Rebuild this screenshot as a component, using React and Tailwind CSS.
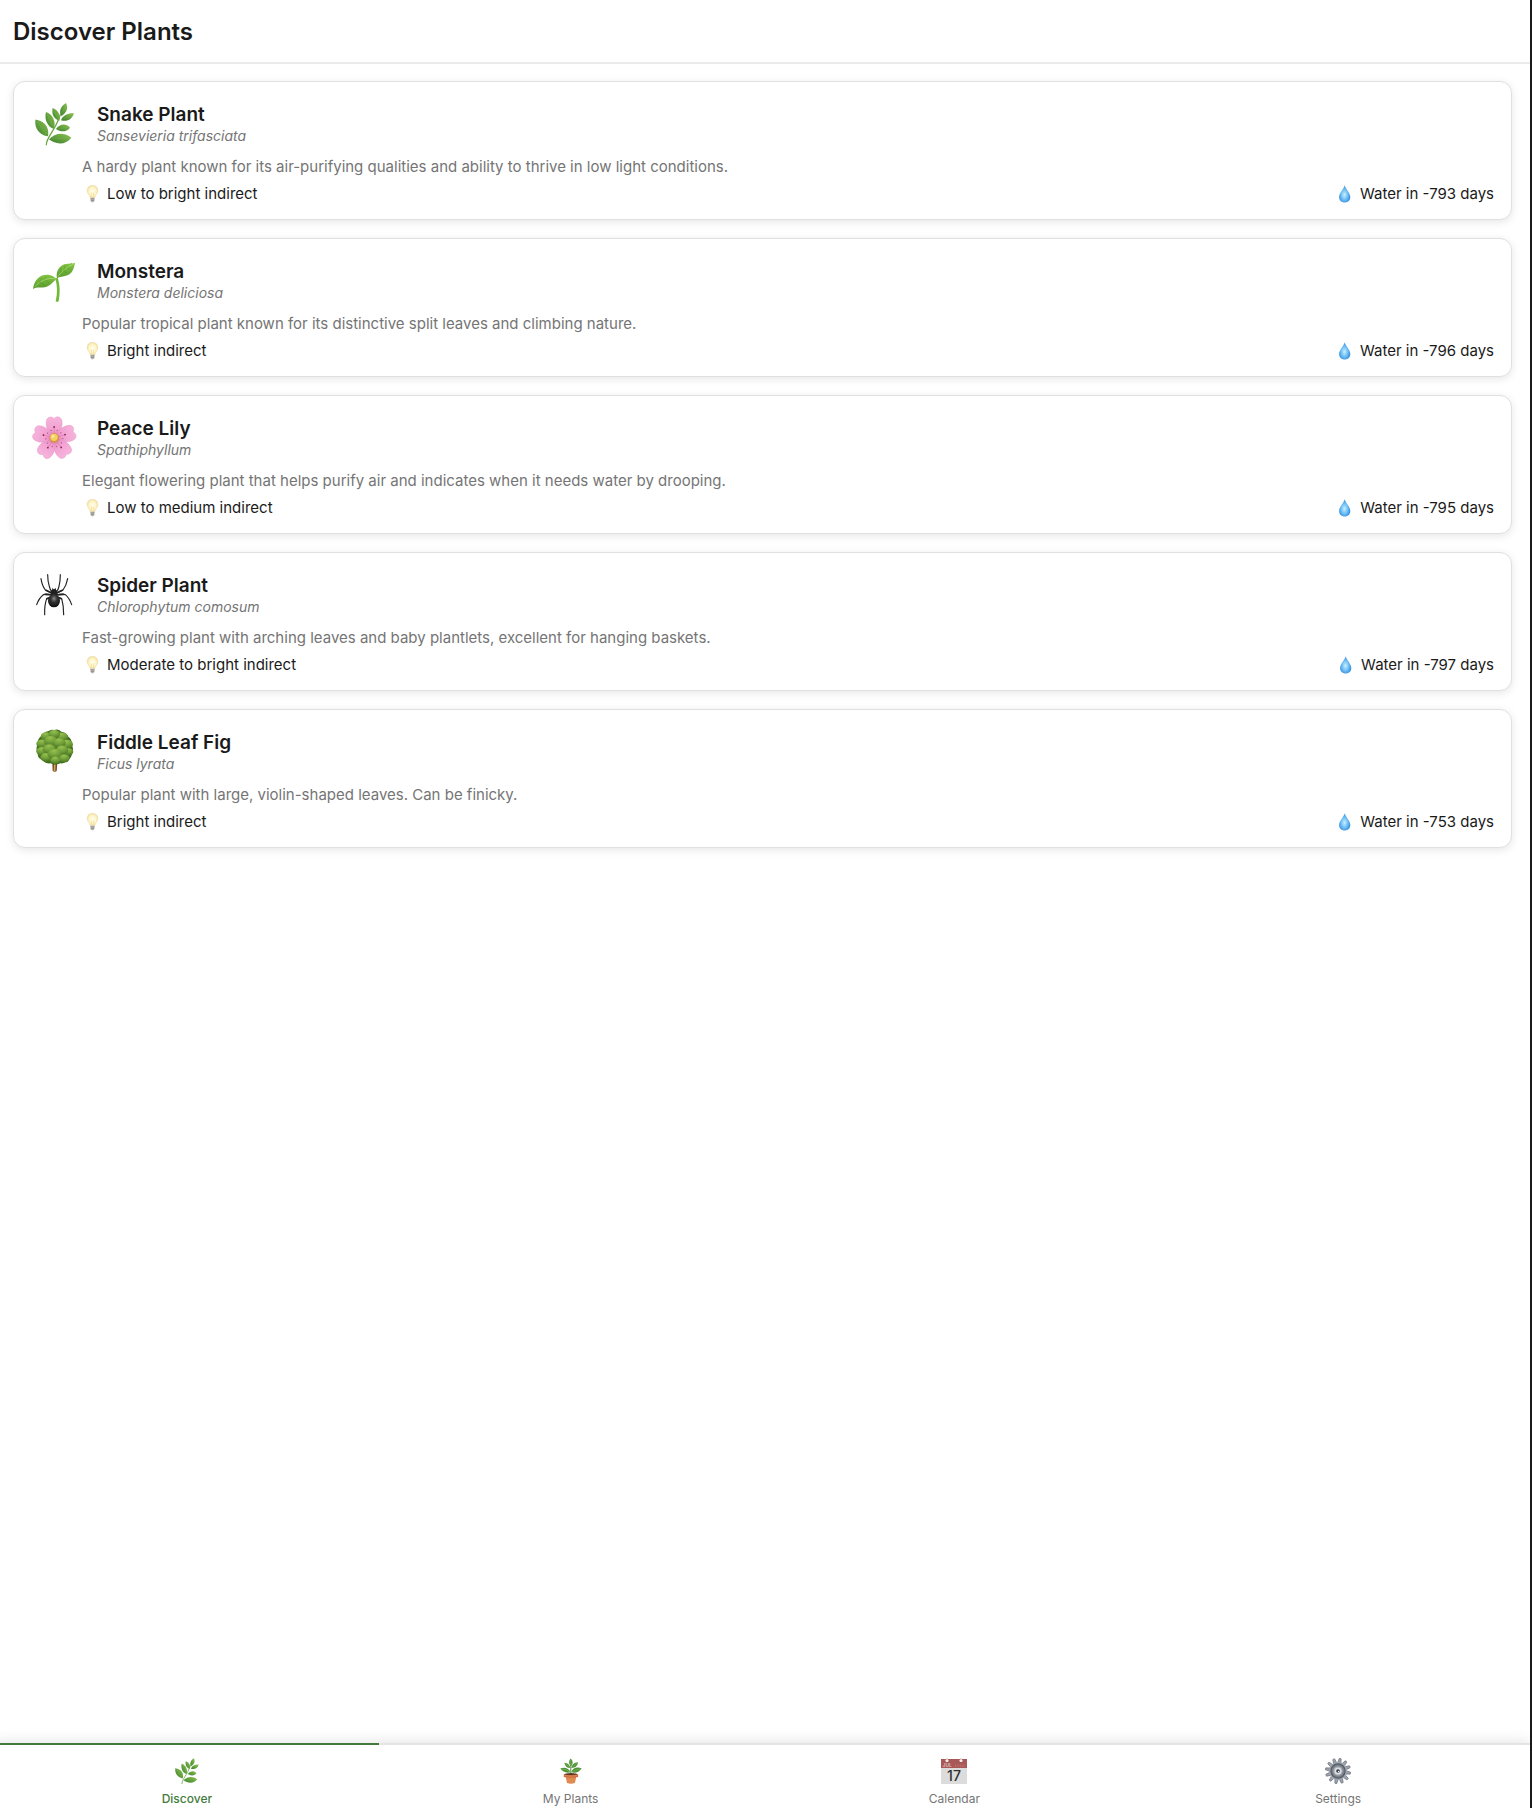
import React, { useState } from 'react';

const HerbIcon = ({ className, viewBox = '36 30 138 144' }) => (
  <svg className={className} viewBox={viewBox} aria-hidden="true">
    <defs>
      <linearGradient id="herb" x1="1" y1="0" x2="0" y2="1">
        <stop offset="0" stopColor="#8cc251" />
        <stop offset="1" stopColor="#3a7f2b" />
      </linearGradient>
    </defs>
    <g fill="url(#herb)">
      <path d="M46 89 C64 90 90 104 84 139 C59 135 43 116 46 89Z" />
      <path d="M78 66 C96 72 109 92 102 117 C82 110 72 88 78 66Z" />
      <path d="M98 54 C114 61 123 74 118 92 C101 87 94 72 98 54Z" />
      <path d="M138 39 C146 54 140 70 123 78 C116 62 123 48 138 39Z" />
      <path d="M162 70 C156 89 141 96 123 91 C129 75 144 69 162 70Z" />
      <path d="M150 113 C139 127 123 127 108 117 C119 101 138 99 150 113Z" />
      <path d="M154 143 C137 166 107 164 87 148 C106 127 133 126 154 143Z" />
    </g>
    <path d="M79 164 C79 142 106 122 121 74" fill="none" stroke="#6aa840" strokeWidth="4" strokeLinecap="round" />
    <path
      d="M52 95 L80 132 M82 73 L99 110 M101 60 L115 84 M136 47 L126 70 M154 75 L130 87 M143 113 L114 116 M146 144 L94 147"
      stroke="#a7d67c"
      strokeWidth="1"
      opacity=".5"
    />
  </svg>
);

// Same herb without the padding around it
const HerbTabIcon = ({ className }) => <HerbIcon className={className} viewBox="40 38 128 128" />;

const SeedlingIcon = ({ className }) => (
  <svg className={className} viewBox="36 22 138 144" aria-hidden="true">
    <defs>
      <linearGradient id="sprout" x1="0" y1="0" x2="0" y2="1">
        <stop offset="0" stopColor="#86c545" />
        <stop offset="1" stopColor="#569a2c" />
      </linearGradient>
    </defs>
    <path d="M107 155 C113 130 112 108 106 87 L113 84 C121 108 120 132 116 155 Q111 158 107 155Z" fill="#72b83a" />
    <path d="M39 118 C42 92 58 75 80 75 C95 75 104 82 112 89 C102 90 97 105 80 111 C64 116 50 110 39 118Z" fill="url(#sprout)" />
    <path d="M111 87 C107 65 117 48 136 43 C148 40 157 43 165 39 C162 55 158 71 142 77 C128 82 119 80 111 87Z" fill="url(#sprout)" />
    <path d="M45 111 C60 93 85 82 108 88 M113 82 C124 64 140 53 160 43" fill="none" stroke="#b3e378" strokeWidth="2" />
    <path
      d="M58 99 L66 83 M70 92 L80 79 M61 98 L74 107 M76 90 L88 100 M122 69 L122 55 M133 60 L135 47 M129 63 L142 71 M142 54 L152 60"
      stroke="#458724"
      strokeWidth="1.5"
      opacity=".6"
    />
  </svg>
);

const petalAngles = [0, 72, 144, 216, 288];

const BlossomIcon = ({ className }) => (
  <svg className={className} viewBox="36 28 138 144" aria-hidden="true">
    <defs>
      <linearGradient id="petal" x1="0" y1="0" x2="0" y2="1">
        <stop offset="0" stopColor="#f7b4dd" />
        <stop offset=".65" stopColor="#f09fd0" />
        <stop offset="1" stopColor="#d5699f" />
      </linearGradient>
    </defs>
    {petalAngles.map((angle) => (
      <g key={angle} transform={`rotate(${angle - 1} 103 101)`}>
        <path
          d="M103 103 C88 88 74 65 81 45 C85 35 96 34 103 42 C110 34 122 35 126 46 C132 65 118 88 103 103Z"
          fill="url(#petal)"
          stroke="#dd86b8"
          strokeWidth="1"
        />
        <path d="M103 94 L103 68" stroke="#d9679f" strokeWidth="1.5" />
        <path d="M103 94 L95 77 M103 94 L111 77" stroke="#e080b2" strokeWidth="1" />
        <circle cx="103" cy="67" r="2.8" fill="#92294f" />
        <circle cx="94" cy="77" r="1.8" fill="#b0487a" />
        <circle cx="112" cy="77" r="1.8" fill="#b0487a" />
      </g>
    ))}
    <circle cx="103" cy="100" r="14" fill="#d7953a" />
    <circle cx="102" cy="98" r="11" fill="#f4cf62" />
    <circle cx="99" cy="95" r="4" fill="#fbe9a0" />
  </svg>
);

const SpiderIcon = ({ className }) => (
  <svg className={className} viewBox="36 32 138 144" aria-hidden="true">
    <defs>
      <radialGradient id="spider" cx=".5" cy=".35" r=".65">
        <stop offset="0" stopColor="#8c8c8c" />
        <stop offset=".4" stopColor="#353535" />
        <stop offset="1" stopColor="#0c0c0c" />
      </radialGradient>
    </defs>
    <g fill="none" stroke="#242424" strokeWidth="3.5" strokeLinecap="round" strokeLinejoin="round">
      <path d="M98 97 Q89 88 88 78 Q83 62 83 43" />
      <path d="M107 97 Q116 88 117 78 Q121 62 121 43" />
      <path d="M96 99 L76 89 Q66 76 63 55" />
      <path d="M109 99 L129 89 Q139 76 143 55" />
      <path d="M96 104 Q82 99 70 103 Q57 113 50 133" />
      <path d="M109 104 Q124 99 136 103 Q148 113 155 133" />
      <path d="M94 110 L80 115 Q73 135 74 163" />
      <path d="M111 110 L125 115 Q131 135 131 163" />
    </g>
    <g fill="none" stroke="#242424" strokeWidth="5" strokeLinecap="round">
      <path d="M97 99 L78 90 M108 99 L127 90 M95 104 L76 102 M110 104 L130 102 M93 111 L81 115 M112 111 L124 115" />
    </g>
    <path d="M97 91 L97 82 L102 88 L107 82 L108 91Z" fill="#1c1c1c" />
    <ellipse cx="102" cy="98" rx="10" ry="11" fill="#1f1f1f" />
    <ellipse cx="102" cy="121" rx="18" ry="20" fill="url(#spider)" />
  </svg>
);

const foliage = [
  [78, 56, 16], [126, 58, 18], [103, 50, 17], [66, 78, 17], [141, 80, 18], [92, 70, 20],
  [118, 76, 19], [66, 101, 17], [146, 102, 14], [88, 95, 20], [126, 98, 19], [78, 119, 17],
  [104, 110, 21], [133, 122, 16], [106, 128, 15],
];

const TreeIcon = ({ className }) => (
  <svg className={className} viewBox="36 31 138 144" aria-hidden="true">
    <defs>
      <radialGradient id="foliage" cx=".45" cy=".15" r=".9">
        <stop offset="0" stopColor="#98c04f" />
        <stop offset=".5" stopColor="#71a03a" />
        <stop offset="1" stopColor="#466f22" />
      </radialGradient>
    </defs>
    <path d="M97 130 L112 130 L110 160 Q104 164 98 160Z" fill="#6f4523" />
    <path d="M102 140 L107 140 L106 161 L101 161Z" fill="#d6a65b" />
    <path
      d="M103 37 Q115 33 124 42 Q139 43 145 57 Q157 65 155 81 Q163 95 156 108 Q154 123 142 127 Q135 139 121 137 Q106 144 91 137 Q76 139 67 127 Q53 122 53 108 Q46 94 53 80 Q52 63 64 56 Q71 42 84 41 Q93 34 103 37Z"
      fill="#42711d"
    />
    {foliage.map(([x, y, r]) => (
      <ellipse key={`${x}-${y}`} cx={x} cy={y} rx={r} ry={r * 0.75} fill="url(#foliage)" />
    ))}
  </svg>
);

const BulbIcon = () => (
  <svg className="h-[18px] w-5 shrink-0" viewBox="0 0 20 18" aria-hidden="true">
    <defs>
      <radialGradient id="bulb" cx=".5" cy=".5" r=".55">
        <stop offset="0" stopColor="#fffef5" />
        <stop offset=".6" stopColor="#fff4c4" />
        <stop offset="1" stopColor="#ecd79a" />
      </radialGradient>
    </defs>
    <path d="M10.5 .2 C13.7 .2 15.9 2.5 15.9 5.5 C15.9 8.8 13.2 9.8 12.8 12.8 L8.2 12.8 C7.8 9.8 5.1 8.8 5.1 5.5 C5.1 2.5 7.3 .2 10.5 .2Z" fill="url(#bulb)" stroke="#eadcae" strokeWidth=".5" />
    <path d="M9.3 12 L9.5 7.5 M11.7 12 L11.5 7.5" stroke="#efd88a" strokeWidth=".6" />
    <path d="M8.4 12.8 H12.6 L12.3 16.3 Q10.5 18.6 8.7 16.3Z" fill="#b5b2ac" />
    <path d="M8.5 14 L12.4 13.7 M8.7 15.6 L12.3 15.3" stroke="#85827c" strokeWidth=".6" />
  </svg>
);

const DropIcon = () => (
  <svg className="h-[18px] w-5 shrink-0" viewBox="0 0 20 18" aria-hidden="true">
    <defs>
      <radialGradient id="drop" cx=".48" cy=".55" r=".55">
        <stop offset="0" stopColor="#c9effd" />
        <stop offset=".5" stopColor="#74c3f6" />
        <stop offset="1" stopColor="#2f88dc" />
      </radialGradient>
    </defs>
    <path d="M9.7 .2 C10.6 4 15.3 7.7 15.3 12 C15.3 15.4 12.8 17.5 9.7 17.5 C6.6 17.5 4.1 15.4 4.1 12 C4.1 7.7 8.8 4 9.7 .2Z" fill="url(#drop)" />
  </svg>
);

const PottedPlantIcon = ({ className }) => (
  <svg className={className} viewBox="0 0 26 26" aria-hidden="true">
    <path d="M12.8 17 V4" stroke="#5a8f3a" strokeWidth="1" />
    <g fill="#4e9238">
      <path d="M13 8 C10.5 6 10.5 3 12.6 .5 C15.5 3 15 6 13 8Z" />
      <path d="M12.3 10 C9 10 7 8.3 6.3 4.8 C9.8 5 12 7 12.3 10Z" />
      <path d="M13.4 10 C13.7 6.7 16 4.5 20 4.3 C19.6 8 17 10.2 13.4 10Z" />
      <path d="M12.4 14.3 C8.5 15.4 4.5 13.8 2.3 10.6 C6.5 8.8 11 10.2 12.4 14.3Z" />
      <path d="M13.3 14.3 C14.3 10.2 19 8.3 23.7 10.5 C21.2 14.2 17 15.4 13.3 14.3Z" />
    </g>
    <path d="M12.8 7 V2 M12 9.6 L7 5.5 M14 9.5 L19 5 M12 14 Q8 11 3.5 11 M14 14 Q18 11.2 22.5 11" fill="none" stroke="#91c967" strokeWidth=".5" />
    <ellipse cx="12.9" cy="16.4" rx="6.8" ry="1.4" fill="#5f3824" />
    <path d="M7.4 18 H18.5 L16.9 25 Q13 26.6 9 25Z" fill="#e08b52" />
    <path d="M5.8 16.2 Q12.9 18.3 20.1 16.2 V19 Q12.9 20.6 5.8 19Z" fill="#cc6c3d" />
    <path d="M7 17.5 Q12.9 19 18.9 17.5" fill="none" stroke="#e59a68" strokeWidth=".6" />
  </svg>
);

const CalendarIcon = ({ className }) => (
  <svg className={className} viewBox="0 0 26 26" aria-hidden="true">
    <path d="M0 1 H26 V26 H0Z" fill="#dcdcdc" />
    <path d="M0 1 H26 V10 H0Z" fill="#a85856" />
    <circle cx="6" cy="2.4" r="1.5" fill="#ffffff" />
    <circle cx="20" cy="2.4" r="1.5" fill="#ffffff" />
    <path d="M6 0 V2.5 M20 0 V2.5" stroke="#b9b0af" strokeWidth=".8" />
    <text x="1.5" y="9" fontSize="5" fontWeight="700" fill="#dcb9b7" fontFamily="Inter, sans-serif">JUL</text>
    <path d="M14 7.6 H24" stroke="#b76f6c" strokeWidth="2.4" strokeDasharray="1 .7" />
    <text x="13" y="22.6" fontSize="14" fontWeight="500" textAnchor="middle" fill="#303030" fontFamily="Inter, sans-serif">17</text>
  </svg>
);

const gearTeeth = [0, 30, 60, 90, 120, 150, 180, 210, 240, 270, 300, 330];

const GearIcon = ({ className }) => (
  <svg className={className} viewBox="0 0 26 26" aria-hidden="true">
    {gearTeeth.map((angle) => (
      <path
        key={angle}
        d="M11.4 5 L12 .5 Q13 0 14 .5 L14.6 5Z"
        fill="#9ea5b0"
        stroke="#5d626b"
        strokeWidth=".6"
        transform={`rotate(${angle + 10} 13 13)`}
      />
    ))}
    <circle cx="13" cy="13" r="9.2" fill="#a1a7b1" />
    <circle cx="13" cy="13" r="7.7" fill="#565b63" />
    <circle cx="13" cy="13" r="6.5" fill="#7b828c" />
    <circle cx="13" cy="13" r="4.8" fill="#a2a8b1" />
    <circle cx="13" cy="13" r="3.6" fill="#dcdfe4" />
    <circle cx="13" cy="13" r="1.8" fill="#33373d" />
    <circle cx="13.5" cy="13.5" r=".7" fill="#eceef1" />
  </svg>
);

const plants = [
  {
    name: 'Snake Plant',
    latin: 'Sansevieria trifasciata',
    description: 'A hardy plant known for its air-purifying qualities and ability to thrive in low light conditions.',
    light: 'Low to bright indirect',
    waterIn: -793,
    Icon: HerbIcon,
  },
  {
    name: 'Monstera',
    latin: 'Monstera deliciosa',
    description: 'Popular tropical plant known for its distinctive split leaves and climbing nature.',
    light: 'Bright indirect',
    waterIn: -796,
    Icon: SeedlingIcon,
  },
  {
    name: 'Peace Lily',
    latin: 'Spathiphyllum',
    description: 'Elegant flowering plant that helps purify air and indicates when it needs water by drooping.',
    light: 'Low to medium indirect',
    waterIn: -795,
    Icon: BlossomIcon,
  },
  {
    name: 'Spider Plant',
    latin: 'Chlorophytum comosum',
    description: 'Fast-growing plant with arching leaves and baby plantlets, excellent for hanging baskets.',
    light: 'Moderate to bright indirect',
    waterIn: -797,
    Icon: SpiderIcon,
  },
  {
    name: 'Fiddle Leaf Fig',
    latin: 'Ficus lyrata',
    description: 'Popular plant with large, violin-shaped leaves. Can be finicky.',
    light: 'Bright indirect',
    waterIn: -753,
    Icon: TreeIcon,
  },
];

const tabs = [
  { label: 'Discover', Icon: HerbTabIcon },
  { label: 'My Plants', Icon: PottedPlantIcon },
  { label: 'Calendar', Icon: CalendarIcon },
  { label: 'Settings', Icon: GearIcon },
];

const PlantCard = ({ plant }) => {
  const { name, latin, description, light, waterIn, Icon } = plant;

  return (
    <li className="rounded-xl border border-[#e0e0e0] bg-white px-[17px] pt-[18px] pb-4 shadow-[0_2px_8px_rgba(0,0,0,0.1)]">
      <div className="flex items-center gap-[18px]">
        <Icon className="h-12 w-12 shrink-0" />
        <div>
          <h2 className="text-[19px] leading-6 font-semibold">{name}</h2>
          <p className="text-sm leading-[18px] text-[#757575] italic">{latin}</p>
        </div>
      </div>
      <div className="ml-[51px]">
        <p className="mt-2 text-[15px] leading-[22px] text-[#757575]">{description}</p>
        <div className="mt-[7px] flex justify-between text-[15px] leading-[18px]">
          <span className="flex items-center gap-[5px]">
            <BulbIcon />
            {light}
          </span>
          <span className="flex items-center gap-[5px]">
            <DropIcon />
            {`Water in ${waterIn} days`}
          </span>
        </div>
      </div>
    </li>
  );
};

const App = () => {
  const [activeTab, setActiveTab] = useState('Discover');

  return (
    <div className="flex min-h-screen flex-col overflow-hidden border-r-2 border-[#1a1a1a] bg-white font-['Inter',sans-serif] text-[#1a1a1a]">
      <header className="border-b-2 border-[#ebebeb] px-[13px] pt-4 pb-[14px]">
        <h1 className="text-2xl leading-8 font-semibold">Discover Plants</h1>
      </header>

      <main className="flex-1 pt-[17px] pr-[18px] pb-[18px] pl-[13px]">
        <ul className="flex flex-col gap-[18px]">
          {plants.map((plant) => (
            <PlantCard key={plant.name} plant={plant} />
          ))}
        </ul>
      </main>

      {/* Bottom tab bar */}
      <nav className="-ml-[5px] flex bg-white shadow-[0_-2px_12px_rgba(0,0,0,0.1)]">
        {tabs.map(({ label, Icon }) => (
          <button
            key={label}
            type="button"
            onClick={() => setActiveTab(label)}
            className={`flex flex-1 flex-col items-center gap-[7px] border-t-2 pt-[13px] pb-px text-xs leading-4 ${
              activeTab === label ? 'border-[#437b3c] font-medium text-[#437b3c]' : 'border-[#e4e4e4] text-[#757575]'
            }`}
          >
            <Icon className="size-[26px]" />
            {label}
          </button>
        ))}
      </nav>
    </div>
  );
};

export default App;
